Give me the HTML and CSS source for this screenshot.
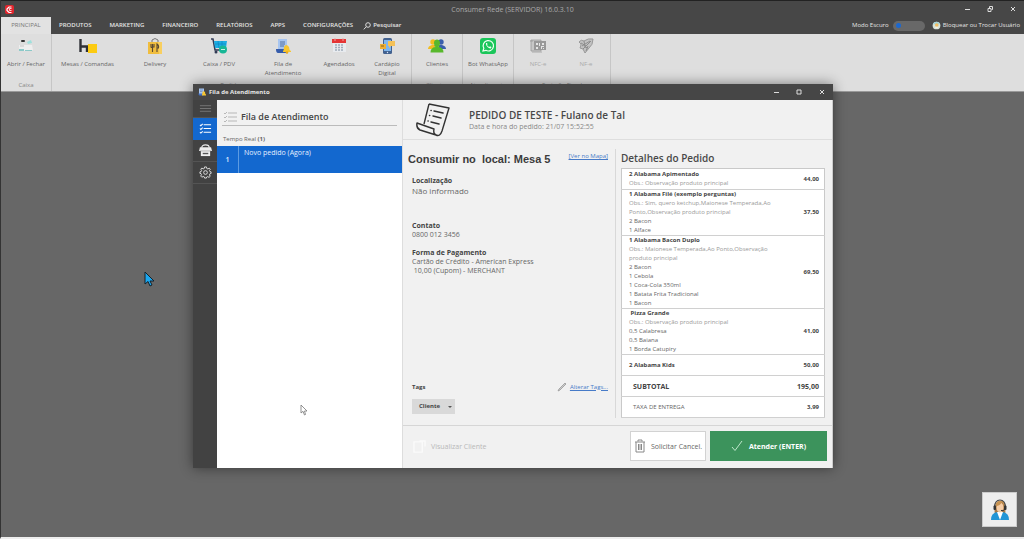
FILE: index.html
```html
<!DOCTYPE html>
<html lang="pt-BR">
<head>
<meta charset="utf-8">
<title>Consumer Rede</title>
<link rel="stylesheet" href="styles.css">
</head>
<body>
<div class="app">
  <header class="top">
    <div class="titlebar">
      <svg class="logo" viewBox="0 0 18 18"><rect width="18" height="18" rx="4" fill="#e3262e"/><path d="M13 4H8L4 8v3l4 4h5" fill="none" stroke="#fff" stroke-width="2.4"/><path d="M13 7H9v4h4" fill="none" stroke="#fff" stroke-width="1.6"/></svg>
      <h1 class="app-title">Consumer Rede (SERVIDOR) 16.0.3.10</h1>
      <div class="controls">
        <button aria-label="Minimizar"><svg viewBox="0 0 8 8"><path d="M2 4.500h5"/></svg></button>
        <button aria-label="Restaurar"><svg viewBox="0 0 8 8"><path d="M2 3.500h3v3H2zM3.500 3V1.500h3v3H5.500"/></svg></button>
        <button aria-label="Fechar"><svg viewBox="0 0 8 8"><path d="M2 2l4 4M6 2L2 6"/></svg></button>
      </div>
    </div>
    <div class="menu">
      <nav class="tabs">
        <button class="tab active">PRINCIPAL</button>
        <button class="tab">PRODUTOS</button>
        <button class="tab">MARKETING</button>
        <button class="tab">FINANCEIRO</button>
        <button class="tab">RELATÓRIOS</button>
        <button class="tab">APPS</button>
        <button class="tab">CONFIGURAÇÕES</button>
        <button class="tab search"><svg viewBox="0 0 8 8"><circle cx="5" cy="3" r="2.300"/><path d="M3.300 4.800L.7 7.400"/></svg>Pesquisar</button>
      </nav>
      <div class="user">
        <label for="dark">Modo Escuro</label>
        <input type="checkbox" id="dark" class="switch">
        <button class="lock"><svg viewBox="0 0 10 10"><circle cx="5" cy="5" r="4.300" fill="#d6e2d8"/><path d="M5 .7a4.300 4.300 0 0 1 4 3H1a4.300 4.300 0 0 1 4-3" fill="#a3d3d8"/><circle cx="5.300" cy="4.500" r="2" fill="#f2bd62"/><path d="M3 8q2-3 4.500 0" fill="#f5efdc"/></svg>Bloquear ou Trocar Usuário</button>
      </div>
    </div>
  </header>

  <section class="ribbon">
    <div class="group">
      <div class="items">
        <button class="item fit"><svg viewBox="0 0 16 16"><rect x="3" y="2" width="4" height="2" rx="1" fill="#333"/><path d="M9 4l4-2 1 3-4 1z" fill="#9ee0dc"/><path d="M1 7h13l1 5-2 1H2l-1-1z" fill="#eee"/><path d="M1 11h5v2H1zM7 12h7v1H7z" fill="#8cc9c8"/><path d="M2 8h4" stroke="#c5c5c5"/></svg><span>Abrir / Fechar</span></button>
      </div>
      <div class="caption">Caixa</div>
    </div>
    <div class="group">
      <div class="items">
        <button class="item wide"><svg class="w18" viewBox="0 0 18 16"><path d="M1.500 1v13M1.500 8.500H8V14" fill="none" stroke="#2f3136" stroke-width="2.400"/><rect x="9" y="6" width="9" height="9" fill="#fccb12"/></svg><span>Mesas / Comandas</span></button>
        <button class="item"><svg viewBox="0 0 16 16"><path d="M5 5V2q3-3 6 0v3" fill="none" stroke="#777" stroke-width="1"/><path d="M1 4h14v12H1z" fill="#f0bd3e"/><path d="M11 4h4v12h-3z" fill="#f8cf60"/><path d="M4 6v3q1 1 2 0M7 6v3H5.500M5.500 6v8M10 14V6q2 1 1.500 4H10" fill="none" stroke="#5a4933" stroke-width="1.100"/></svg><span>Delivery</span></button>
        <button class="item"><svg viewBox="0 0 16 16"><path d="M0 1h2l2 11h8" fill="none" stroke="#323b55" stroke-width="1.500"/><path d="M3 3h13l-1 7H4z" fill="#1daee4"/><path d="M4 6h11M7 3l1 7M11 3v7" stroke="#0d87c2" stroke-width=".7"/><circle cx="5" cy="14" r="1.500" fill="#323b55"/><circle cx="12" cy="11.500" r="4" fill="#17b796"/><path d="M10 11.500h4" stroke="#c5f2e5"/></svg><span>Caixa / PDV</span></button>
        <button class="item"><svg viewBox="0 0 16 16"><path d="M3 1h9v11H3z" fill="#a7c5f0"/><path d="M5 4h5M5 6h5M5 8h4" stroke="#55709f" stroke-width="1"/><path d="M1 11h10v4H3q-2 0-2-4" fill="#355cab"/><path d="M8 13q1-1 1-4 2-4 5 0 0 3 2 4v1H8z" fill="#f8c631"/><circle cx="12" cy="14.500" r="1.300" fill="#eca916"/></svg><span>Fila de Atendimento</span></button>
        <button class="item narrow"><svg viewBox="0 0 16 16"><path d="M2 1h13v13H2z" fill="#e8ebef"/><path d="M1 1h14v4H1z" fill="#e53535"/><path d="M4 0v3M12 0v3" stroke="#eca5a5"/><path d="M4 7h9M4 9.500h9M4 12h9" stroke="#a0adba" stroke-width="1.500" stroke-dasharray="2 1"/></svg><span>Agendados</span></button>
        <button class="item narrow"><svg viewBox="0 0 16 16"><rect x="4" y="0" width="9" height="16" rx="1.500" fill="#42618f"/><rect x="5" y="2" width="7" height="11" fill="#7eb6ed"/><circle cx="8.500" cy="14.500" r=".7" fill="#dbe8f4"/><path d="M9 3h7v5h-4l-2 2V8H9z" fill="#f4c158"/><path d="M1 6h6v5H1z" fill="#edaf35"/><path d="M2 8h3" stroke="#8d641d"/></svg><span>Cardápio Digital</span></button>
      </div>
      <div class="caption">Pedidos</div>
    </div>
    <div class="group">
      <div class="items">
        <button class="item fit"><svg class="w18" viewBox="0 0 18 16"><circle cx="5" cy="4" r="2.700" fill="#f2bd20"/><path d="M0 11q0-3 4-4h3v4z" fill="#f2bd20"/><circle cx="13" cy="4" r="2.700" fill="#395fac"/><path d="M11 11V7h3q4 1 4 4z" fill="#395fac"/><path d="M6 5q0-3.500 3-3.500T12 5q0 3-1.500 4 5 .5 5 5.500h-13q0-5 5-5.500Q6 8 6 5" fill="#58b82c"/></svg><span>Clientes</span></button>
      </div>
      <div class="caption">Clientes</div>
    </div>
    <div class="group">
      <div class="items">
        <button class="item fit"><svg viewBox="0 0 16 16"><rect width="16" height="16" rx="3" fill="#1bc65a"/><path d="M3 13l.8-2.700a5.200 5.200 0 1 1 2 2z" fill="none" stroke="#f1fff4" stroke-width="1.200"/><path d="M6 5q-.5 2 1.500 4T11 10.300l.5-1.300-1.500-.7-.7.7Q7.700 8.500 7 7l.6-.7L7 5z" fill="#f1fff4"/></svg><span>Bot WhatsApp</span></button>
      </div>
      <div class="caption">Atendimento</div>
    </div>
    <div class="group">
      <div class="items">
        <button class="item narrow" disabled><svg viewBox="0 0 16 16"><path d="M1 2h10v11H1zM0 3h3" fill="#c7c7c7" stroke="#999" stroke-width=".8"/><path d="M4 3h12v9H4z" fill="#999"/><path d="M6 5h2v2H6zM12 5h2v2h-2zM6 9h2v2H6zM9 5h1v3H9zM11 8h3v1h-2v2h-1zM13 10h1v1h-1z" fill="#e6e6e6"/><path d="M2 14h10" stroke="#aaa"/></svg><span>NFC-e</span></button>
        <button class="item narrow" disabled><svg viewBox="0 0 16 16"><path d="M1 4q2-3 5-1 4-3 9-2 0 6-4 9l-4 5-2-4-3-1q1-2 1-4z" fill="#c2c2c2" stroke="#999"/><path d="M5 11l8-8M3 5l5 3M6 3l1 6 3 1M4 8l8-5M8 13l2-5" fill="none" stroke="#8d8d8d"/></svg><span>NF-e</span></button>
      </div>
      <div class="caption">Emissão Fiscal</div>
    </div>
  </section>

  <main class="desktop"></main>

  <section class="window">
    <div class="window-bar">
      <svg class="window-icon" viewBox="0 0 16 16"><path d="M2 1h10v11H2z" fill="#a7c5f0"/><path d="M4 4h6M4 7h5" stroke="#55709f"/><path d="M1 11h10v4H3q-2 0-2-4" fill="#4472c8"/><path d="M8 13q1-1 1-5 2-3 5 0 0 4 2 5v2H8z" fill="#f8c631"/></svg>
      <h2 class="window-title">Fila de Atendimento</h2>
      <div class="controls">
        <button aria-label="Minimizar"><svg viewBox="0 0 8 8"><path d="M2 4.500h5"/></svg></button>
        <button aria-label="Maximizar"><svg viewBox="0 0 8 8"><path d="M2 2h4v4H2z"/></svg></button>
        <button aria-label="Fechar"><svg viewBox="0 0 8 8"><path d="M2 2l4 4M6 2L2 6"/></svg></button>
      </div>
    </div>
    <div class="window-body">
      <nav class="side">
        <button class="side-btn slim" aria-label="Menu"><svg viewBox="0 0 14 14"><path d="M1 4h12M1 7h12M1 10h12" stroke="#858585" stroke-width=".8"/></svg></button>
        <button class="side-btn on" aria-label="Fila"><svg viewBox="0 0 14 14"><path d="M5 3h8M5 7h8M5 11h8M1 3l1 1 2-2M1 7l1 1 2-2M1 11l1 1 2-2" fill="none" stroke="#fff" stroke-width="1.100"/></svg></button>
        <button class="side-btn" aria-label="Entregas"><svg viewBox="0 0 14 14"><path d="M3 4q0-3 4-3t4 3" fill="none" stroke="#eee" stroke-width="1.300"/><path d="M1 3.500h12l1 4H0z" fill="#eee"/><path d="M2 7h10v6H2z" fill="#eee"/><path d="M4 9.500h6v1.500H4z" fill="#555"/><path d="M1 7.500h12" stroke="#888" stroke-width=".6"/></svg></button>
        <button class="side-btn" aria-label="Configurações"><svg viewBox="0 0 14 14" fill="none" stroke="#e2e2e2"><path d="M6 1h2l.4 1.700 1.200.5L11 2.300 12.200 3.500l-.9 1.400.5 1.200L13 6.300v1.800l-1.300.3-.5 1.200.9 1.400-1.300 1.300-1.400-.9-1.200.5L8 13H6l-.3-1.300-1.200-.5-1.400.9-1.300-1.300.9-1.400-.5-1.200L1 8V6.300l1.300-.3.500-1.200-.9-1.400L3.100 2.200l1.400.9 1.200-.5z"/><circle cx="7" cy="7" r="2"/></svg></button>
      </nav>
      <aside class="queue">
        <div class="queue-head">
          <h3 class="queue-title"><svg viewBox="0 0 14 14"><path d="M5 3h9M5 7h9M5 11h9M1 3l1 1 2-2M1 7l1 1 2-2M1 11l1 1 2-2" fill="none" stroke="#aaa" stroke-width=".8"/></svg>Fila de Atendimento</h3>
          <div class="queue-sub">Tempo Real <b>(1)</b></div>
        </div>
        <button class="queue-row"><span class="num">1</span><span class="queue-text">Novo pedido (Agora)</span></button>
      </aside>
      <article class="order">
        <header class="order-head">
          <svg class="receipt" viewBox="0 0 34 34" fill="none" stroke="#333" stroke-width="1.400" stroke-linejoin="round"><path d="M13 1l20 4-7 23q-2 6-6 4-3-1-2-6L1 20q-1 5 3 7l16 5M8 21L13 1"/><g stroke-width="1.500" stroke-linecap="round"><path d="M18 8l9 2M17 13l8 2M15 19l8 2"/><path d="M15 7.500h.2M13.500 12.500h.2M12 18h.2"/></g></svg>
          <div>
            <h3 class="order-title">PEDIDO DE TESTE - Fulano de Tal</h3>
            <p class="order-date">Data e hora do pedido: 21/07 15:52:55</p>
          </div>
        </header>
        <div class="order-main">
          <section class="info">
            <div class="place"><h3>Consumir no&nbsp; local: Mesa 5</h3><a href="#mapa">[Ver no Mapa]</a></div>
            <div class="block location"><b>Localização</b><p>Não informado</p></div>
            <div class="block contact"><b>Contato</b><p>0800 012 3456</p></div>
            <div class="block"><b>Forma de Pagamento</b><p>Cartão de Crédito - American Express<br>&nbsp;10,00 (Cupom) - MERCHANT</p></div>
            <div class="tags"><b>Tags</b><a href="#tags"><svg viewBox="0 0 10 10"><path d="M1 9l1-2 6-6 1 1-6 6z" fill="#ccc" stroke="#999" stroke-width=".8"/></svg><span>Alterar Tags...</span></a></div>
            <button class="tag">Cliente<i></i></button>
          </section>
          <section class="details">
            <h3>Detalhes do Pedido</h3>
            <table>
              <tbody>
                <tr><td><b>2 Alabama Apimentado</b><p class="obs">Obs.: Observação produto principal</p></td><td class="price">44,00</td></tr>
                <tr><td><b>1 Alabama Filé (exemplo perguntas)</b><p class="obs">Obs.: Sim, quero ketchup,Maionese Temperada,Ao<br>Ponto,Observação produto principal</p><p>2 Bacon</p><p>1 Alface</p></td><td class="price">37,50</td></tr>
                <tr><td><b>1 Alabama Bacon Duplo</b><p class="obs">Obs.: Maionese Temperada,Ao Ponto,Observação<br>produto principal</p><p>2 Bacon</p><p>1 Cebola</p><p>1 Coca-Cola 350ml</p><p>1 Batata Frita Tradicional</p><p>1 Bacon</p></td><td class="price">69,50</td></tr>
                <tr><td><b>&nbsp;Pizza Grande</b><p class="obs">Obs.: Observação produto principal</p><p>0,5 Calabresa</p><p>0,5 Baiana</p><p>1 Borda Catupiry</p></td><td class="price">41,00</td></tr>
                <tr><td><b>2 Alabama Kids</b></td><td class="price">50,00</td></tr>
                <tr class="sum total"><td><b>SUBTOTAL</b></td><td class="price">195,00</td></tr>
                <tr class="sum"><td>TAXA DE ENTREGA</td><td class="price">3,99</td></tr>
              </tbody>
            </table>
          </section>
        </div>
        <footer class="order-foot">
          <button class="view" disabled><svg viewBox="0 0 14 14"><path d="M1 2h9v11H1zM7 1h6v6" fill="none" stroke="#fafafa" stroke-width="1.500"/></svg>Visualizar Cliente</button>
          <button class="cancel"><svg viewBox="0 0 12 14"><path d="M1 3h10M4 2.500V1h4v1.500M2 3v10h8V3M4.500 5v6M6 5v6M7.500 5v6" fill="none" stroke="#888"/></svg>Solicitar Cancel.</button>
          <button class="accept"><svg viewBox="0 0 12 12"><path d="M1 7l3 3.500L11 1" fill="none" stroke="#bfe8cc"/></svg>Atender (ENTER)</button>
        </footer>
      </article>
    </div>
  </section>

  <button class="support" aria-label="Suporte"><svg viewBox="0 0 20 22"><path d="M5 17Q3 3 10 2t5 15z" fill="#a87a49"/><path d="M1 21q0-7 6-8l3 3 3-3q6 1 6 8z" fill="#2396d6"/><path d="M7 13l3 8 3-8z" fill="#fff"/><ellipse cx="10" cy="8.500" rx="3.500" ry="5" fill="#f6cda6"/><path d="M6 7q4 0 6-4 2 2 2 5l1-2Q14 1 9 2 5 3 6 7" fill="#c89351"/><path d="M4.500 8Q5 1 10 1t5.500 7" fill="none" stroke="#444" stroke-width="1.200"/><rect x="3.500" y="6.500" width="2.500" height="4.500" rx="1" fill="#333"/><rect x="14" y="6.500" width="2.500" height="4.500" rx="1" fill="#333"/><path d="M15 10q-1 2-4 1.500" fill="none" stroke="#333"/></svg></button>
  <svg class="cursor blue" viewBox="0 0 11 16"><path d="M1 1v12l3-2.500L6 15l2-1-2-4h4z" fill="#1ba7ef" stroke="#14212a"/></svg>
  <svg class="cursor pale" viewBox="0 0 8 12"><path d="M1 1v8l2-1.700L4.500 11l1-.5L4.500 7H7z" fill="#fff" stroke="#777" stroke-width=".8"/></svg>
</div>
</body>
</html>
```
FILE: styles.css
```css
* { box-sizing: border-box; }
body { margin: 0; font: 7px/9px "Open Sans", "Noto Sans", sans-serif; color: #666; }
h1, h2, h3, p { margin: 0; font-size: inherit; font-weight: inherit; }
button { font: inherit; color: inherit; background: none; border: 0; padding: 0; }
svg { display: block; flex: none; }

.app { position: relative; display: flex; flex-direction: column; min-height: 100vh; background: #676767; border-left: 1px solid #333; border-bottom: 2px solid #eee; overflow: hidden; }
.top { background: #474747; border-top: 1px solid #222; color: #e4e4e4; }
.titlebar { display: flex; align-items: center; height: 16px; }
.logo { width: 9px; height: 9px; margin-left: 4px; }
.app-title { flex: 1; text-align: center; color: #aaa; padding-left: 56px; }
.controls { display: flex; }
.controls button { display: flex; justify-content: center; width: 23px; }
.controls svg { width: 8px; height: 8px; fill: none; stroke: #ddd; stroke-width: 1; }

.menu { display: flex; justify-content: space-between; align-items: center; height: 17px; font-size: 6px; }
.tabs { display: flex; gap: 18px; height: 17px; }
.tab { display: flex; align-items: center; gap: 2px; font-weight: 600; white-space: nowrap; }
.tab.active { width: 50px; margin-right: -10px; justify-content: center; background: #e2e2e2; color: #777; font-weight: 400; }
.tab.search { margin-left: -8px; }
.tab.search svg { width: 8px; height: 8px; fill: none; stroke: #ddd; }
.user { display: flex; align-items: center; gap: 4px; padding-right: 4px; white-space: nowrap; }
.switch { appearance: none; display: flex; align-items: center; width: 32px; height: 10px; margin: 0; padding-left: 3px; border-radius: 5px; background: #686868; }
.switch::before { content: ""; width: 5px; height: 5px; border-radius: 50%; background: #1c68cf; }
.lock { display: flex; align-items: center; gap: 2px; margin-left: 3px; }
.lock svg { width: 9px; height: 9px; }

.ribbon { display: flex; height: 58px; background: #dedede; border-bottom: 1px solid #999; font-size: 6px; }
.group { display: flex; flex-direction: column; justify-content: space-between; border-right: 1px solid #c6c6c6; }
.items { display: flex; padding-top: 4px; }
.item { display: flex; flex-direction: column; align-items: center; gap: 6px; width: 64px; }
.item span { width: 44px; }
.item.narrow { width: 48px; }
.item.narrow span { width: 32px; }
.item.fit { width: 50px; }
.item.wide { width: 71px; }
.item.wide span { width: auto; }
.item svg { width: 16px; height: 16px; }
.item .w18 { width: 18px; }
.item:disabled { color: #aaa; }
.caption { text-align: center; color: #888; padding-bottom: 1px; }
.desktop { flex: 1; }

.window { position: absolute; left: 192px; top: 84px; width: 640px; display: flex; flex-direction: column; background: #f1f1f1; box-shadow: 0 0 12px #0007; }
.window-bar { display: flex; align-items: center; gap: 3px; height: 16px; padding-left: 5px; background: #464646; color: #e8e8e8; }
.window-icon { width: 8px; height: 8px; }
.window-title { flex: 1; font-size: 6px; font-weight: 700; }
.window-body { display: flex; border-right: 1px solid #ccc; }
.side { width: 24px; background: #424242; }
.side-btn { display: flex; align-items: center; justify-content: center; width: 24px; height: 22px; border-bottom: 1px solid #545454; }
.side-btn.slim { height: 18px; }
.side-btn.on { background: #1368cf; border-color: #1368cf; }
.side-btn svg { width: 13px; height: 13px; }
.queue { width: 186px; background: #fff; border-right: 1px solid #ddd; }
.queue-head { padding: 9px 5px 0; height: 46px; background: #f1f1f1; }
.queue-title { display: flex; align-items: center; gap: 4px; padding: 0 0 1px 1px; border-bottom: 1px solid #bbb; font-size: 9px; line-height: 15px; font-weight: 600; color: #444; }
.queue-title svg { width: 14px; height: 14px; }
.queue-sub { padding: 9px 1px 0; font-size: 6px; }
.queue-row { display: flex; width: 100%; height: 27px; background: #1368cf; color: #e4efff; text-align: left; }
.num { width: 22px; height: 27px; line-height: 27px; text-align: center; font-weight: 600; border-right: 1px solid #5c9be2; }
.queue-text { padding: 2px 5px; }

.order { flex: 1; display: flex; flex-direction: column; min-width: 0; }
.order-head { display: flex; align-items: center; gap: 19px; height: 40px; padding-left: 13px; border-bottom: 1px solid #dedede; }
.receipt { width: 34px; height: 34px; }
.order-title { font-size: 10px; line-height: 14px; font-weight: 600; color: #484848; }
.order-date { color: #888; }
.order-main { display: flex; gap: 5px; padding: 9px 7px 7px 5px; border-bottom: 1px solid #d6d6d6; }
.info { flex: 1; display: flex; flex-direction: column; padding: 0 7px 4px 4px; border-right: 1px solid #d8d8d8; }
.info b, .details b, .price { font-weight: 700; color: #444; }
.place { display: flex; justify-content: space-between; align-items: center; margin-left: -4px; }
.place h3 { font: 700 11px/20px "Liberation Sans", sans-serif; color: #3c3c3c; }
.info a { color: #477bc8; text-decoration: underline; font-size: 6px; }
.place a { align-self: flex-start; line-height: 14px; }
.block { margin-bottom: 9px; }
.location { margin: 7px 0 24px; }
.location p { font-size: 8px; line-height: 12px; }
.tags { display: flex; justify-content: space-between; align-items: center; margin-top: auto; }
.tags a { display: flex; align-items: center; gap: 3px; text-decoration: none; }
.tags a span { text-decoration: underline; }
.tags b, .tag { font-size: 6px; }
.tags svg { width: 10px; height: 10px; }
.tag { display: flex; align-items: center; justify-content: space-between; width: 43px; height: 15px; margin-top: 7px; padding: 0 3px 0 7px; background: #d9d9d9; font-weight: 700; color: #444; }
.tag i { border: 2px solid transparent; border-top-color: #555; border-bottom: 0; }
.details { width: 204px; }
.details h3 { font-size: 10px; line-height: 19px; font-weight: 600; color: #484848; }
.details table { width: 100%; border-collapse: collapse; background: #fff; border: 1px solid #c9c9c9; font-size: 6px; }
.details tr { height: 21px; border-bottom: 1px solid #d0d0d0; }
.details td { padding: 0 0 0 7px; white-space: nowrap; vertical-align: middle; }
.details .sum td:first-child { padding-left: 11px; }
.details .total { font-size: 7px; }
.details td.price { padding: 0 5px 0 0; text-align: right; }
.obs { color: #999; }

.order-foot { display: flex; align-items: center; gap: 4px; height: 42px; padding: 0 5px 2px 10px; }
.order-foot button { display: flex; align-items: center; justify-content: center; height: 30px; }
.order-foot .view { gap: 5px; margin-right: auto; color: #b8b8b8; }
.view svg { width: 13px; height: 13px; }
.cancel { width: 76px; gap: 5px; background: #fff; border: 1px solid #d2d2d2; }
.cancel svg { width: 12px; height: 14px; }
.accept { width: 117px; gap: 6px; background: #3c935c; color: #fff; font-weight: 700; }
.accept svg { width: 12px; height: 12px; }

.support { position: absolute; right: 7px; bottom: 10px; display: flex; align-items: center; justify-content: center; width: 35px; height: 35px; background: #eee; border: 1px solid #ccc; }
.support svg { width: 20px; height: 22px; }
.cursor { position: absolute; }
.blue { left: 143px; top: 271px; width: 11px; height: 16px; }
.pale { left: 299px; top: 404px; width: 8px; height: 12px; }
```
